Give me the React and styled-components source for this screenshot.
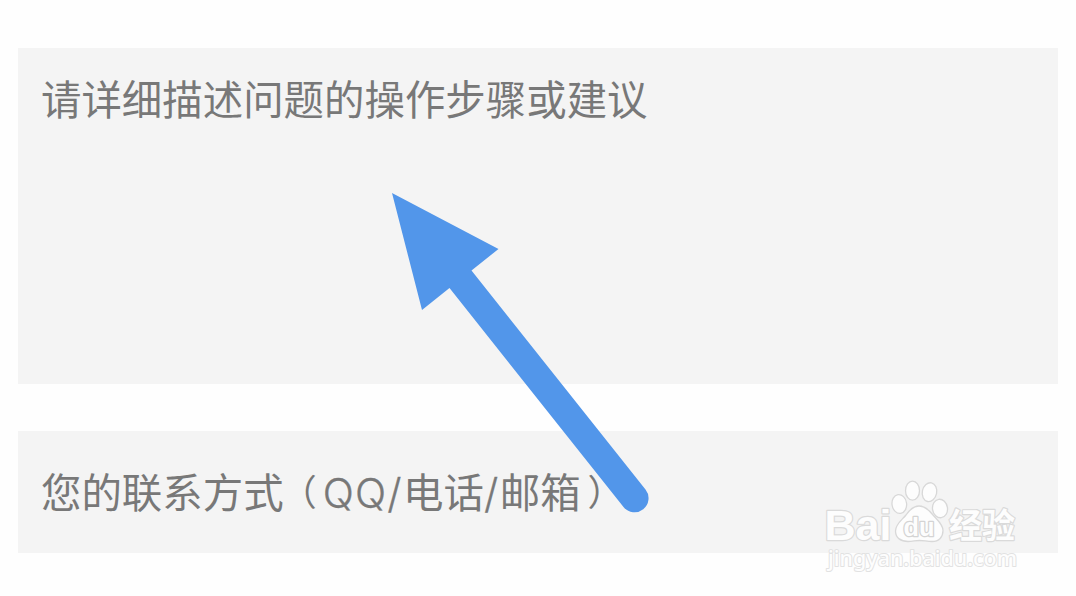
import React from "react";
import styled, { createGlobalStyle } from "styled-components";

const GlobalStyle = createGlobalStyle`
  body { margin: 0; background: #fefefe; }
  * { box-sizing: border-box; }
`;

const Page = styled.main`
  position: relative;
  display: flex;
  flex-direction: column;
  gap: 47px;
  height: 596px;
  padding: 48px 18px 0;
  overflow: hidden;
  font-family: Inter, "Noto Sans CJK SC", sans-serif;
`;

const Field = styled.div`
  display: flex;
  align-items: flex-start;
  height: ${(p) => p.$height}px;
  padding: ${(p) => p.$top}px 23px 0;
  background: #f4f4f4;
`;

const Placeholder = styled.span`
  color: #787878;
  font-size: 40.45px;
  line-height: 60px;
  font-weight: 400;
  white-space: nowrap;
`;

const Latin = styled.span`
  font-size: 41px;
  font-weight: 300;
  letter-spacing: ${(p) => p.$spacing || 0}px;
  -webkit-text-stroke: 0.3px #787878;
`;

const Paren = styled.span`
  font-family: "Noto Sans CJK SC", sans-serif;
  font-size: 36px;
  line-height: 1;
  vertical-align: 2px;
  margin-left: ${(p) => p.$before}px;
  margin-right: ${(p) => p.$after}px;
`;

const Overlay = styled.svg`
  position: absolute;
  left: ${(p) => p.$x}px;
  top: ${(p) => p.$y}px;
  pointer-events: none;
`;

const MarkText = styled.text`
  font-family: ${(p) => p.$family};
  font-size: ${(p) => p.$size}px;
  font-weight: ${(p) => p.$weight};
  fill: #fdfdfd;
  stroke: ${(p) => p.$line || "#dadada"};
  stroke-width: ${(p) => p.$stroke || 2.4}px;
  stroke-linejoin: round;
  paint-order: stroke;
`;

function Arrow() {
  return (
    <Overlay $x={380} $y={180} width="280" height="345" viewBox="380 180 280 345">
      <path
        d="M392 193 L498.500 249 L471.500 270.500 L645.500 489.500 A14 14 0 0 1 623.500 507 L449.500 288 L422 310 Z"
        fill="#5296ea"
      />
    </Overlay>
  );
}

function Watermark() {
  return (
    <Overlay $x={810} $y={470} width="230" height="115" viewBox="0 0 230 115">
      <MarkText x="14.500" y="70" textLength="67" lengthAdjust="spacingAndGlyphs" $family={'"Liberation Sans", sans-serif'} $size={43} $weight={700}>Bai</MarkText>
      <g fill="#fdfdfd" stroke="#d8d8d8" strokeWidth="1.3">
        <ellipse cx="89.300" cy="34" rx="7.300" ry="9.500" transform="rotate(-8 89.300 34)" />
        <ellipse cx="102.500" cy="20.700" rx="7" ry="9.500" />
        <ellipse cx="119.500" cy="22.200" rx="7.200" ry="9.500" transform="rotate(12 119.500 22.200)" />
        <ellipse cx="130" cy="38.500" rx="7.500" ry="9.300" transform="rotate(-8 130 38.500)" />
        <path d="M109 36 C103 36 99.500 40 96 45 C92 50 85.500 54 85.500 61 C85.500 68 91 71.500 98 71.500 C103 71.500 105 70.500 109.500 70.500 C114 70.500 117 71.500 122 71.500 C129 71.500 133 67 133 60.500 C133 54 127 50 123 45 C119 40 115 36 109 36 Z" />
      </g>
      <MarkText x="93.500" y="66" textLength="31" lengthAdjust="spacingAndGlyphs" $family={'"Liberation Sans", sans-serif'} $size={25} $weight={700} $stroke={2.6} $line="#d4d4d4">du</MarkText>
      <MarkText x="139" y="68" textLength="66" lengthAdjust="spacingAndGlyphs" $family={'"Noto Sans CJK SC", sans-serif'} $size={34} $weight={700}>经验</MarkText>
      <MarkText x="18" y="96" textLength="189" lengthAdjust="spacingAndGlyphs" $family={'"Noto Sans", sans-serif'} $size={22} $weight={500} $stroke={2} $line="#e2e2e2">jingyan.baidu.com</MarkText>
    </Overlay>
  );
}

export default function App() {
  return (
    <Page>
      <GlobalStyle />
      <Field $height={336} $top={23}>
        <Placeholder>请详细描述问题的操作步骤或建议</Placeholder>
      </Field>
      <Field $height={122} $top={32}>
        <Placeholder>
          您的联系方式<Paren $before={-3} $after={6}>（</Paren><Latin $spacing={1.2}>QQ</Latin><Latin $spacing={1.5}>/</Latin>电话<Latin $spacing={1.5}>/</Latin>邮箱<Paren $before={7} $after={0}>）</Paren>
        </Placeholder>
      </Field>
      <Arrow />
      <Watermark />
    </Page>
  );
}
